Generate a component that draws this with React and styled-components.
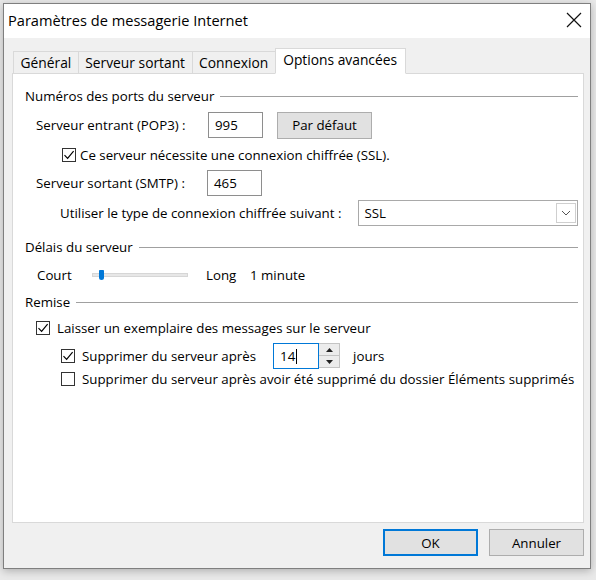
import React from 'react'
import styled, { createGlobalStyle } from 'styled-components'

const Global = createGlobalStyle`
  html, body { margin: 0; padding: 0; }
  body {
    width: 596px;
    height: 580px;
    overflow: hidden;
    background: #e9e9e9;
    font-family: "Open Sans", "Noto Sans", sans-serif;
    font-size: 13.3px;
    color: #000;
  }
`

const Page = styled.div`
  padding: 3px 5px 0 3px;
`

const Window = styled.div`
  width: 586px;
  height: 564px;
  border: 1px solid #7f7f7f;
  background: #f0f0f0;
  box-shadow: 0 2px 8px rgba(0, 0, 0, 0.25);
  display: flex;
  flex-direction: column;
`

const TitleBar = styled.div`
  height: 34px;
  box-sizing: border-box;
  background: #fff;
  display: flex;
  align-items: center;
  justify-content: space-between;
  padding: 0 8px 3px 4px;
  font-size: 14.6px;
`

const Body = styled.div`
  flex: 1;
  padding: 9px 6px 0 8px;
  display: flex;
  flex-direction: column;
`

const TabRow = styled.div`
  display: flex;
  align-items: flex-end;
  height: 26px;
  padding-left: 2px;
`

const Tab = styled.div`
  height: ${p => (p.$active ? '26px' : '23px')};
  padding: 0 ${p => (p.$active ? '7.5px' : '6.5px')};
  display: flex;
  align-items: center;
  font-size: 13.8px;
  background: ${p => (p.$active ? '#fff' : '#f0f0f0')};
  border: 1px solid #d9d9d9;
  border-bottom: ${p => (p.$active ? '1px solid #fff' : '1px solid #d9d9d9')};
  margin-left: -1px;
  margin-bottom: -1px;
  position: relative;
  z-index: ${p => (p.$active ? 2 : 1)};
  box-sizing: border-box;
  padding-bottom: ${p => (p.$active ? '4px' : '0')};
`

const Panel = styled.div`
  height: 450px;
  background: #fff;
  border: 1px solid #d9d9d9;
  padding: 12px 5px 0 12px;
  display: flex;
  flex-direction: column;
  box-sizing: border-box;
`

const GroupHead = styled.div`
  height: 20px;
  margin-top: ${p => p.$mt || 0}px;
  display: flex;
  align-items: center;
  gap: 6px;
  &::after {
    content: '';
    flex: 1;
    height: 1px;
    background: #a0a0a0;
    margin-top: 1px;
  }
`

const Row = styled.div`
  height: ${p => p.$h || 20}px;
  margin-top: ${p => p.$mt || 0}px;
  padding-left: ${p => p.$indent || 0}px;
  display: flex;
  align-items: center;
`

const Label = styled.span`
  width: ${p => (p.$w ? p.$w + 'px' : 'auto')};
  margin-right: ${p => p.$mr || 0}px;
  flex-shrink: 0;
  white-space: nowrap;
`

const TextBox = styled.div`
  width: ${p => p.$w}px;
  height: 26px;
  box-sizing: border-box;
  border: 1px solid ${p => (p.$focus ? '#0078d7' : '#8e8e8e')};
  background: #fff;
  display: flex;
  align-items: center;
  padding-left: 6px;
`

const Caret = styled.span`
  display: inline-block;
  width: 1px;
  height: 15px;
  background: #000;
  margin-left: 1px;
`

const Button = styled.div`
  width: ${p => p.$w || 95}px;
  height: 27px;
  box-sizing: border-box;
  background: #e1e1e1;
  border: ${p => (p.$default ? '2px solid #0078d7' : '1px solid #adadad')};
  display: flex;
  align-items: center;
  justify-content: center;
  margin-left: ${p => p.$ml || 0}px;
`

const Box = styled.span`
  width: 14px;
  height: 14px;
  box-sizing: border-box;
  border: 1px solid #333;
  background: #fff;
  flex-shrink: 0;
  margin-right: ${p => p.$mr || 4}px;
  display: flex;
  align-items: center;
  justify-content: center;
`

const Select = styled.div`
  flex: 1;
  height: 26px;
  box-sizing: border-box;
  border: 1px solid #a9a9a9;
  background: #fff;
  display: flex;
  align-items: center;
  justify-content: space-between;
  padding: 0 1px 0 5px;
  margin-left: 17px;
`

const DropBtn = styled.span`
  width: 20px;
  height: 20px;
  box-sizing: border-box;
  border: 1px solid #cfcfcf;
  display: flex;
  align-items: center;
  justify-content: center;
`

const Track = styled.div`
  width: 96px;
  height: 4px;
  background: #e7e7e7;
  border: 1px solid #d6d6d6;
  box-sizing: border-box;
  position: relative;
  margin-right: 18px;
`

const Thumb = styled.span`
  position: absolute;
  left: 6px;
  top: -4px;
  width: 5px;
  height: 10px;
  background: #0078d7;
  border-radius: 1px 1px 3px 3px;
`

const Spin = styled.div`
  display: flex;
  height: 25px;
  margin: 0 13px 0 ${p => p.$ml}px;
`

const SpinButtons = styled.div`
  width: 21px;
  border: 1px solid #c4c4c4;
  border-left: none;
  display: flex;
  flex-direction: column;
  box-sizing: border-box;
  background: #ececec;
`

const SpinHalf = styled.span`
  flex: 1;
  display: flex;
  align-items: center;
  justify-content: center;
  & + & { border-top: 1px solid #c4c4c4; }
`

const Footer = styled.div`
  display: flex;
  justify-content: flex-end;
  padding: 6px 0 0 0;
  gap: 11px;
`

const Check = () => (
  <svg width="12" height="12" viewBox="0 0 12 12">
    <path d="M1.5 6.2 L4.6 9.3 L10.6 2.2" fill="none" stroke="#000" strokeWidth="1.2" />
  </svg>
)

const CheckBox = ({ checked, mr }) => <Box $mr={mr}>{checked && <Check />}</Box>

export default function App() {
  return (
    <Page>
      <Global />
      <Window>
        <TitleBar>
          <span>Paramètres de messagerie Internet</span>
          <svg width="16" height="16" viewBox="0 0 16 16">
            <path d="M1 1 L15 15 M15 1 L1 15" stroke="#111" strokeWidth="1.2" />
          </svg>
        </TitleBar>
        <Body>
          <TabRow>
            <Tab>Général</Tab>
            <Tab>Serveur sortant</Tab>
            <Tab>Connexion</Tab>
            <Tab $active>Options avancées</Tab>
          </TabRow>
          <Panel>
            <GroupHead>Numéros des ports du serveur</GroupHead>
            <Row $h={26} $mt={6} $indent={11}>
              <Label $w={172}>Serveur entrant (POP3) :</Label>
              <TextBox $w={55}>995</TextBox>
              <Button $ml={14}>Par défaut</Button>
            </Row>
            <Row $mt={7} $indent={37}>
              <CheckBox checked />
              <Label>Ce serveur nécessite une connexion chiffrée (SSL).</Label>
            </Row>
            <Row $h={26} $mt={5} $indent={11}>
              <Label $w={171}>Serveur sortant (SMTP) :</Label>
              <TextBox $w={55}>465</TextBox>
            </Row>
            <Row $h={26} $mt={4} $indent={35}>
              <Label>Utiliser le type de connexion chiffrée suivant :</Label>
              <Select>
                <span>SSL</span>
                <DropBtn>
                  <svg width="10" height="6" viewBox="0 0 10 6">
                    <path d="M1 1 L5 5 L9 1" fill="none" stroke="#555" strokeWidth="1" />
                  </svg>
                </DropBtn>
              </Select>
            </Row>
            <GroupHead $mt={11}>Délais du serveur</GroupHead>
            <Row $mt={8} $indent={12}>
              <Label $w={55}>Court</Label>
              <Track>
                <Thumb />
              </Track>
              <Label $w={44}>Long</Label>
              <Label>1 minute</Label>
            </Row>
            <GroupHead $mt={7}>Remise</GroupHead>
            <Row $mt={6} $indent={11}>
              <CheckBox checked mr={7} />
              <Label>Laisser un exemplaire des messages sur le serveur</Label>
            </Row>
            <Row $h={25} $mt={5} $indent={36}>
              <CheckBox checked mr={7} />
              <Label>Supprimer du serveur après</Label>
              <Spin $ml={17}>
                <TextBox $w={46} $focus>
                  14<Caret />
                </TextBox>
                <SpinButtons>
                  <SpinHalf>
                    <svg width="7" height="4" viewBox="0 0 7 4"><path d="M0 4 L3.5 0 L7 4 Z" fill="#222" /></svg>
                  </SpinHalf>
                  <SpinHalf>
                    <svg width="7" height="4" viewBox="0 0 7 4"><path d="M0 0 L3.5 4 L7 0 Z" fill="#222" /></svg>
                  </SpinHalf>
                </SpinButtons>
              </Spin>
              <Label>jours</Label>
            </Row>
            <Row $mt={1} $indent={36}>
              <CheckBox mr={7} />
              <Label>Supprimer du serveur après avoir été supprimé du dossier Éléments supprimés</Label>
            </Row>
          </Panel>
          <Footer>
            <Button $default>OK</Button>
            <Button>Annuler</Button>
          </Footer>
        </Body>
      </Window>
    </Page>
  )
}
